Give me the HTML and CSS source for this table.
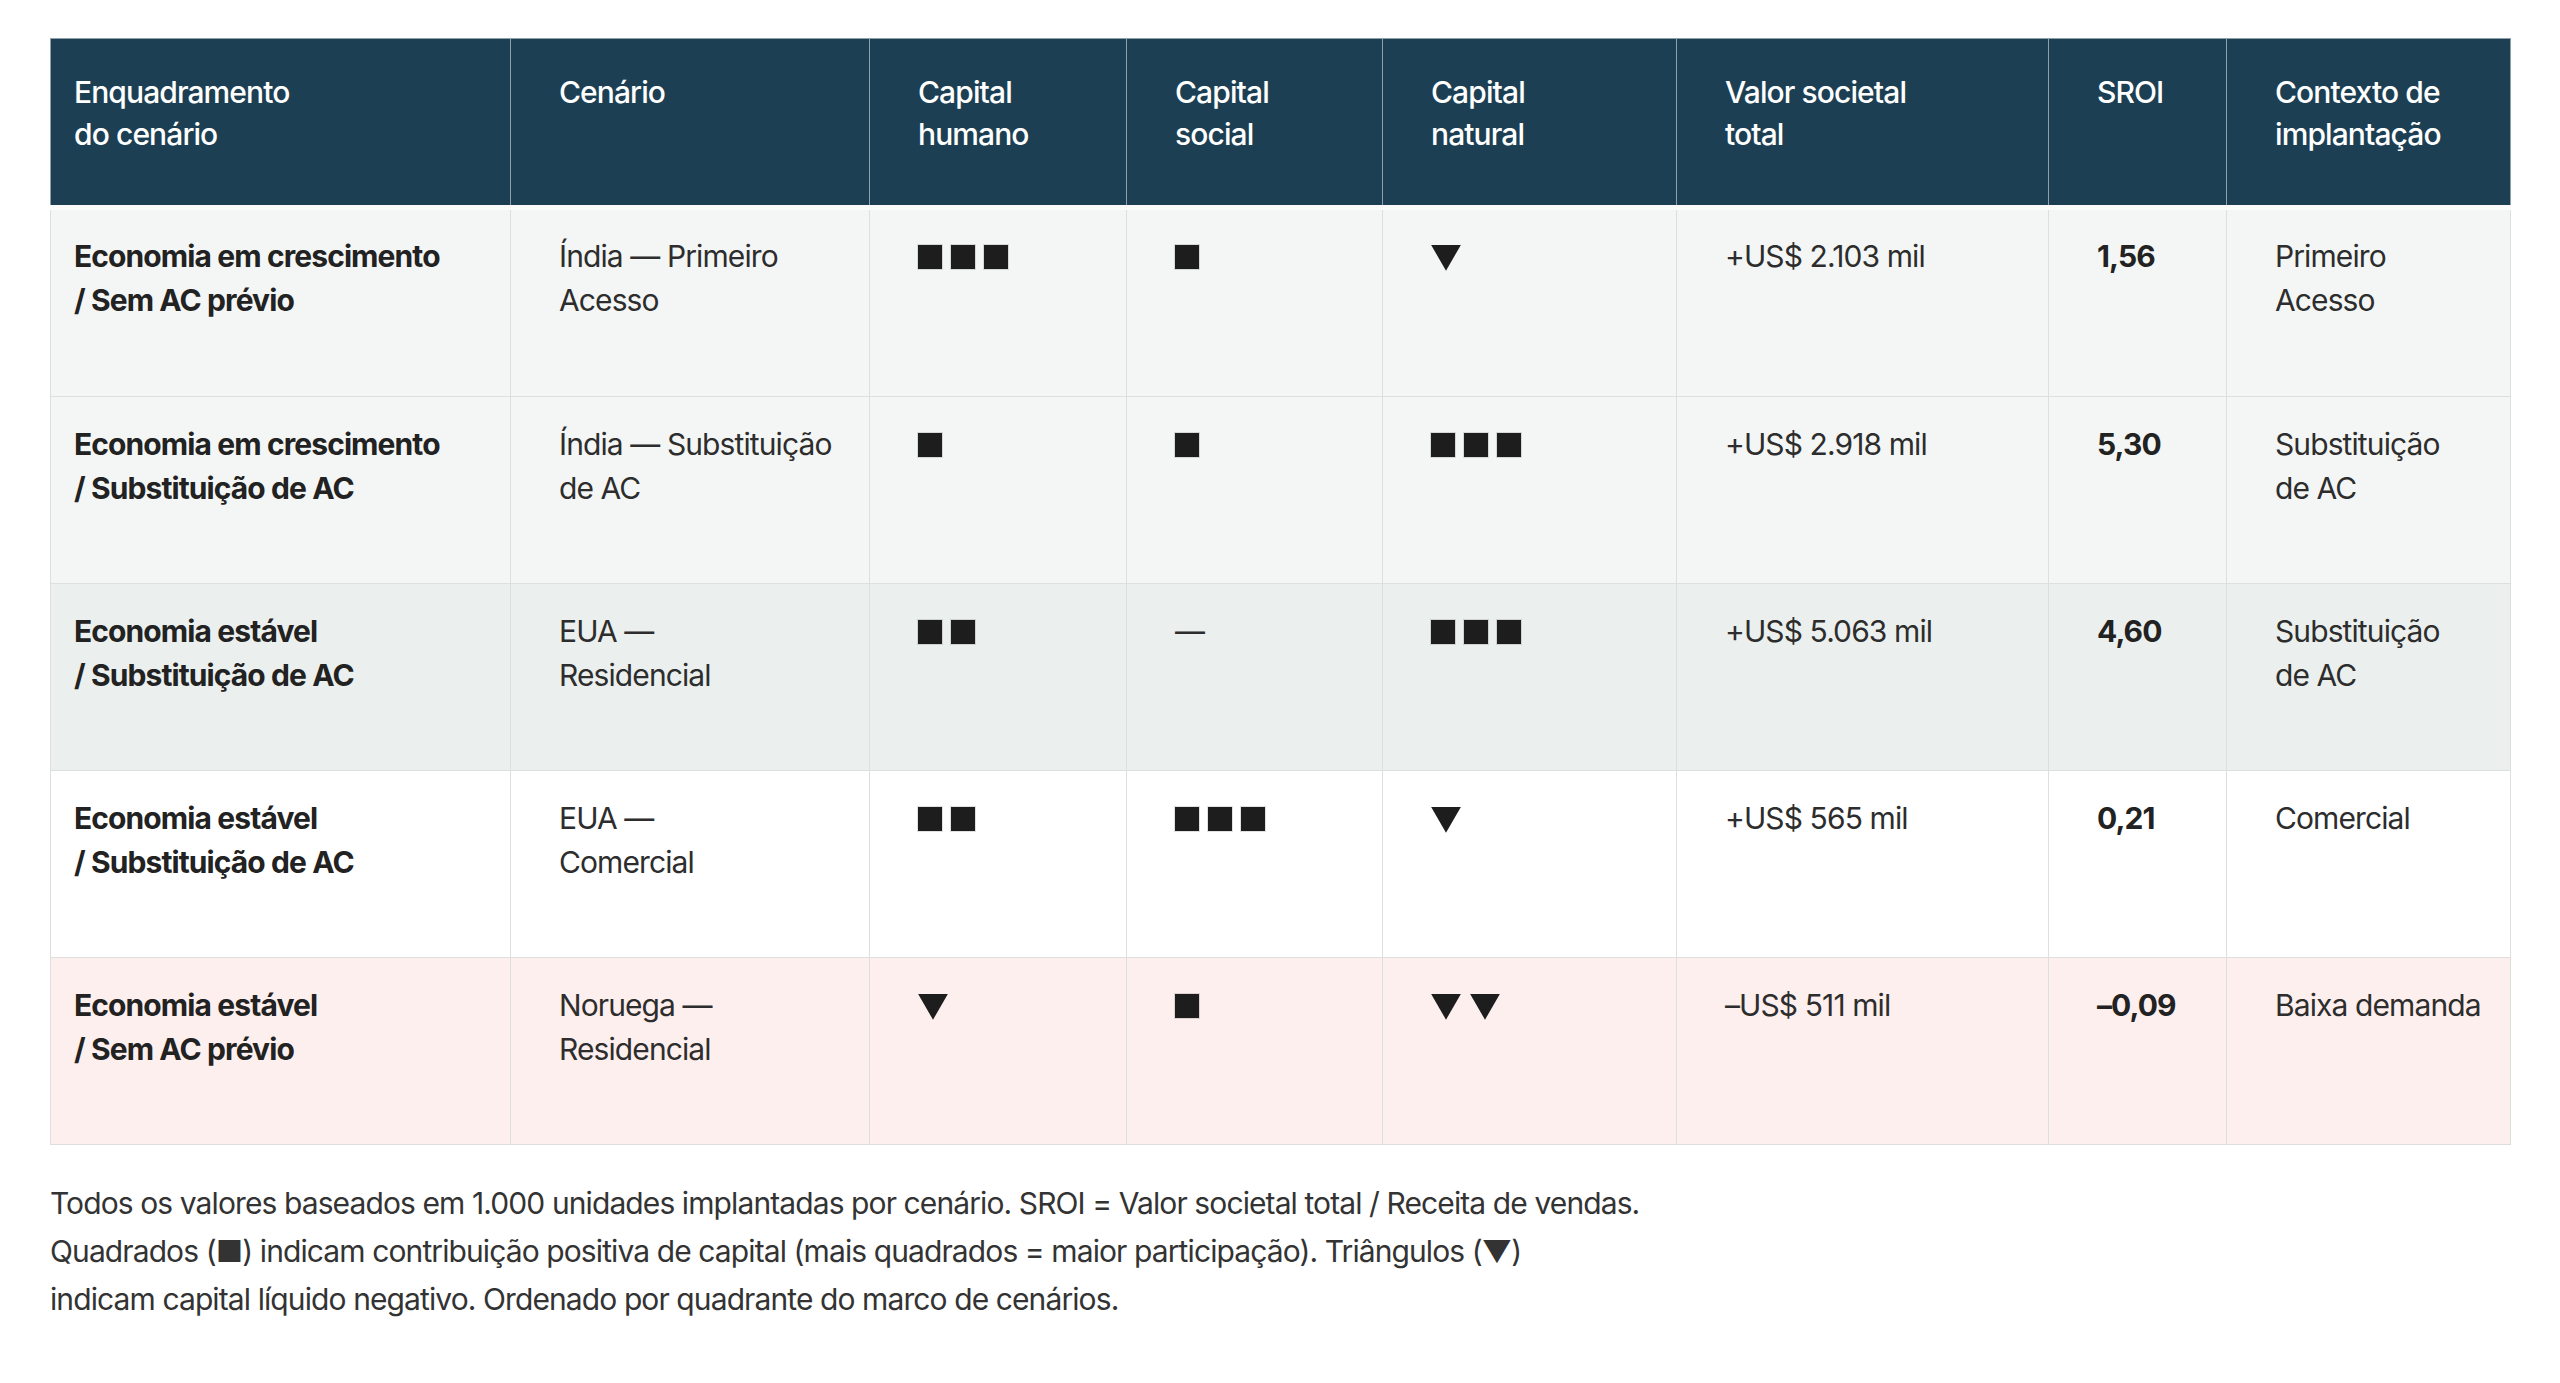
FILE: index.html
```html
<!DOCTYPE html>
<html lang="pt">
<head>
<meta charset="utf-8">
<title>Cenários SROI</title>
<link rel="stylesheet" href="styles.css">
</head>
<body>
<main class="page">
  <table class="sroi">
    <colgroup>
      <col class="c1"><col class="c2"><col class="c3"><col class="c4"><col class="c5"><col class="c6"><col class="c7"><col class="c8">
    </colgroup>
    <thead>
      <tr>
        <th>Enquadramento<br>do cenário</th>
        <th>Cenário</th>
        <th>Capital<br>humano</th>
        <th>Capital<br>social</th>
        <th>Capital<br>natural</th>
        <th>Valor societal<br>total</th>
        <th>SROI</th>
        <th>Contexto de<br>implantação</th>
      </tr>
    </thead>
    <tbody>
      <tr class="r-a first">
        <td class="frame">Economia em crescimento<br>/ Sem AC prévio</td>
        <td>Índia — Primeiro<br>Acesso</td>
        <td><span class="marks"><i class="sq"></i><i class="sq"></i><i class="sq"></i></span></td>
        <td><span class="marks"><i class="sq"></i></span></td>
        <td><span class="marks"><i class="tri"></i></span></td>
        <td>+US$ 2.103 mil</td>
        <td class="num">1,56</td>
        <td>Primeiro<br>Acesso</td>
      </tr>
      <tr class="r-a">
        <td class="frame">Economia em crescimento<br>/ Substituição de AC</td>
        <td>Índia — Substituição<br>de AC</td>
        <td><span class="marks"><i class="sq"></i></span></td>
        <td><span class="marks"><i class="sq"></i></span></td>
        <td><span class="marks"><i class="sq"></i><i class="sq"></i><i class="sq"></i></span></td>
        <td>+US$ 2.918 mil</td>
        <td class="num">5,30</td>
        <td>Substituição<br>de AC</td>
      </tr>
      <tr class="r-b">
        <td class="frame">Economia estável<br>/ Substituição de AC</td>
        <td>EUA —<br>Residencial</td>
        <td><span class="marks"><i class="sq"></i><i class="sq"></i></span></td>
        <td>—</td>
        <td><span class="marks"><i class="sq"></i><i class="sq"></i><i class="sq"></i></span></td>
        <td>+US$ 5.063 mil</td>
        <td class="num">4,60</td>
        <td>Substituição<br>de AC</td>
      </tr>
      <tr class="r-c">
        <td class="frame">Economia estável<br>/ Substituição de AC</td>
        <td>EUA —<br>Comercial</td>
        <td><span class="marks"><i class="sq"></i><i class="sq"></i></span></td>
        <td><span class="marks"><i class="sq"></i><i class="sq"></i><i class="sq"></i></span></td>
        <td><span class="marks"><i class="tri"></i></span></td>
        <td>+US$ 565 mil</td>
        <td class="num">0,21</td>
        <td>Comercial</td>
      </tr>
      <tr class="r-d">
        <td class="frame">Economia estável<br>/ Sem AC prévio</td>
        <td>Noruega —<br>Residencial</td>
        <td><span class="marks"><i class="tri"></i></span></td>
        <td><span class="marks"><i class="sq"></i></span></td>
        <td><span class="marks"><i class="tri"></i><i class="tri"></i></span></td>
        <td>–US$ 511 mil</td>
        <td class="num">–0,09</td>
        <td>Baixa demanda</td>
      </tr>
    </tbody>
  </table>
  <p class="note">Todos os valores baseados em 1.000 unidades implantadas por cenário. SROI = Valor societal total / Receita de vendas.<br>Quadrados (■) indicam contribuição positiva de capital (mais quadrados = maior participação). Triângulos (▼)<br>indicam capital líquido negativo. Ordenado por quadrante do marco de cenários.</p>
</main>
</body>
</html>
```
FILE: styles.css
```css
html, body {
  margin: 0;
  padding: 0;
  background: #ffffff;
}

body {
  font-family: Inter, "Noto Sans", "DejaVu Sans", sans-serif;
  color: #2a2a2a;
}

.page {
  padding: 38px 50px 0 50px;
}

.sroi {
  width: 2460px;
  border-collapse: collapse;
  table-layout: fixed;
  font-size: 30px;
  letter-spacing: -0.03em;
}

.c1 { width: 460px; }
.c2 { width: 359px; }
.c3 { width: 257px; }
.c4 { width: 256px; }
.c5 { width: 294px; }
.c6 { width: 372px; }
.c7 { width: 178px; }
.c8 { width: 284px; }

.sroi th {
  background: #1d3f54;
  color: #ffffff;
  font-weight: 500;
  text-align: left;
  vertical-align: top;
  line-height: 42px;
  padding: 32px 20px 0 48px;
  height: 134px;
  border: 1px solid #8fa0aa;
  border-bottom: 1px solid #c2ccd0;
}

.sroi th:first-child {
  padding-left: 23px;
}

.sroi td {
  vertical-align: top;
  line-height: 43.5px;
  padding: 26px 20px 0 48px;
  height: 160px;
  border: 1px solid #dedfdb;
  color: #2d2d2d;
}

.sroi td:first-child {
  padding-left: 23px;
}

.sroi tr.first td {
  border-top: 5px solid #fafbfa;
  padding-top: 25px;
  height: 161px;
}

.sroi td.frame {
  font-weight: 700;
  color: #222222;
}

.sroi td.num {
  font-weight: 700;
  color: #222222;
}

.r-a td { background: #f4f6f5; }
.r-b td { background: #ebf0ee; }
.r-c td { background: #ffffff; }
.r-d td { background: #fdefee; }

.marks {
  display: flex;
  align-items: center;
  gap: 9px;
  height: 43.5px;
}

.sq {
  display: block;
  width: 24px;
  height: 24px;
  background: #1d1d1d;
  box-shadow: 0 0 0 1px rgba(0, 0, 0, 0.12);
}

.tri {
  display: block;
  width: 30px;
  height: 26px;
  margin-top: 2px;
  background: #1d1d1d;
  clip-path: polygon(0 0, 100% 0, 50% 100%);
}

.note {
  margin: 34px 0 0 0;
  font-size: 30px;
  line-height: 48px;
  letter-spacing: -0.03em;
  color: #333333;
}
```
